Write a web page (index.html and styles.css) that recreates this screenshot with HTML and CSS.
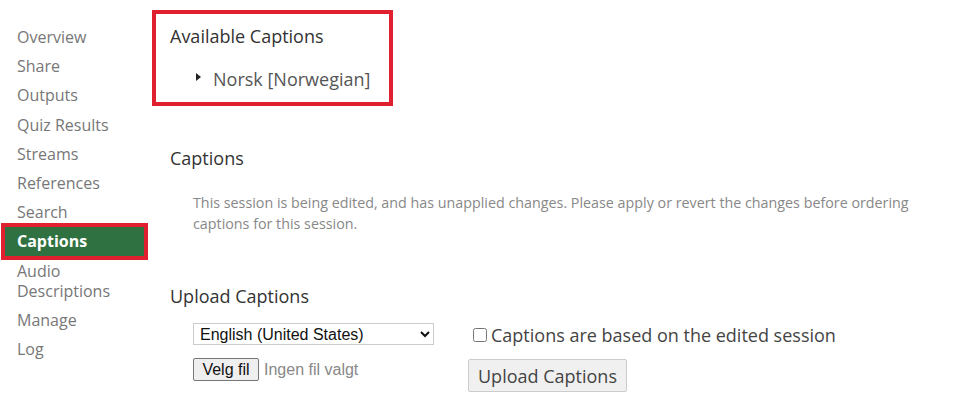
FILE: index.html
```html
<!DOCTYPE html>
<html>
<head>
<meta charset="utf-8">
<link rel="stylesheet" href="styles.css">
</head>
<body>
<div class="page">
  <nav class="sidebar">
    <a class="nav-item">Overview</a>
    <a class="nav-item">Share</a>
    <a class="nav-item">Outputs</a>
    <a class="nav-item">Quiz Results</a>
    <a class="nav-item">Streams</a>
    <a class="nav-item">References</a>
    <a class="nav-item">Search</a>
    <a class="nav-item active">Captions</a>
    <a class="nav-item">Audio<br>Descriptions</a>
    <a class="nav-item">Manage</a>
    <a class="nav-item">Log</a>
  </nav>
  <main class="main">
    <section class="available">
      <h2 class="heading">Available Captions</h2>
      <div class="lang-row"><span class="caret"></span><span class="lang">Norsk [Norwegian]</span></div>
    </section>
    <section class="section captions">
      <h2 class="heading">Captions</h2>
      <p class="notice">This session is being edited, and has unapplied changes. Please apply or revert the changes before ordering captions for this session.</p>
    </section>
    <section class="section upload">
      <h2 class="heading">Upload Captions</h2>
      <div class="upload-grid">
        <div class="col-left">
          <select class="lang-select"><option>English (United States)</option></select>
          <div class="file-row"><button class="file-btn">Velg fil</button><span class="file-name">Ingen fil valgt</span></div>
        </div>
        <div class="col-right">
          <label class="check"><input type="checkbox" class="checkbox"><span>Captions are based on the edited session</span></label>
          <button class="upload-btn">Upload Captions</button>
        </div>
      </div>
    </section>
  </main>
</div>
</body>
</html>
```
FILE: styles.css
```css
* { box-sizing: border-box; }
html, body { margin: 0; padding: 0; background: #fff; }
body { font-family: "Open Sans", "Noto Sans", sans-serif; color: #333; }
.page { display: flex; width: 960px; height: 420px; }
.sidebar { width: 152px; padding-top: 22.5px; display: flex; flex-direction: column; }
.nav-item { display: block; font-size: 16px; line-height: 20px; color: #777; padding: 4.6px 0 4.6px 17px; }
.nav-item.active { background: #2f7140; color: #fff; font-weight: 700; outline: 4px solid #e0202e; margin-left: 5px; width: 139px; padding-left: 12px; }
.main { flex: 1; padding-top: 10px; display: flex; flex-direction: column; }
.heading { font-weight: 400; font-size: 18px; margin: 0; color: #333; line-height: 24px; }
.available { border: 4px solid #e0202e; width: 241px; height: 96px; padding: 10px 0 0 14px; }
.lang-row { display: flex; align-items: center; margin-top: 19px; padding-left: 26px; line-height: 24px; }
.caret { width: 0; height: 0; border-top: 4.5px solid transparent; border-bottom: 4.5px solid transparent; border-left: 5px solid #222; margin-right: 12px; margin-top: -5px; }
.lang { font-size: 18px; color: #555; }
.section { padding-left: 18px; }
.captions { margin-top: 40px; }
.notice { font-size: 14.3px; color: #888; line-height: 21px; margin: 22px 0 0 23px; width: 735px; }
.upload { margin-top: 50px; }
.upload-grid { display: flex; padding-left: 23px; margin-top: 15px; }
.col-left { width: 280px; display: flex; flex-direction: column; }
.lang-select { width: 241px; height: 22px; font-family: "Liberation Sans", Arial, sans-serif; font-size: 16px; color: #111; border: 1px solid #ccc; background: #fff; padding: 0 2px; }
.file-row { display: flex; align-items: center; margin-top: 13px; }
.file-btn { font-family: "Liberation Sans", Arial, sans-serif; font-size: 16px; height: 23px; width: 66px; padding: 0; border: 1px solid #767676; border-radius: 2px; background: #efefef; color: #111; }
.file-name { font-family: "Liberation Sans", Arial, sans-serif; font-size: 16px; color: #888; margin-left: 5px; }
.col-right { display: flex; flex-direction: column; }
.check { display: flex; align-items: center; font-size: 18px; color: #444; line-height: 24px; }
.checkbox { width: 14px; height: 14px; margin: 0 4px 0 0; }
.upload-btn { align-self: flex-start; margin-top: 12px; font-family: "Open Sans", sans-serif; font-size: 18px; color: #444; height: 33px; padding: 0 9px; background: #f0f0f0; border: 1px solid #ccc; border-radius: 2px; margin-left: -5px; }
```
